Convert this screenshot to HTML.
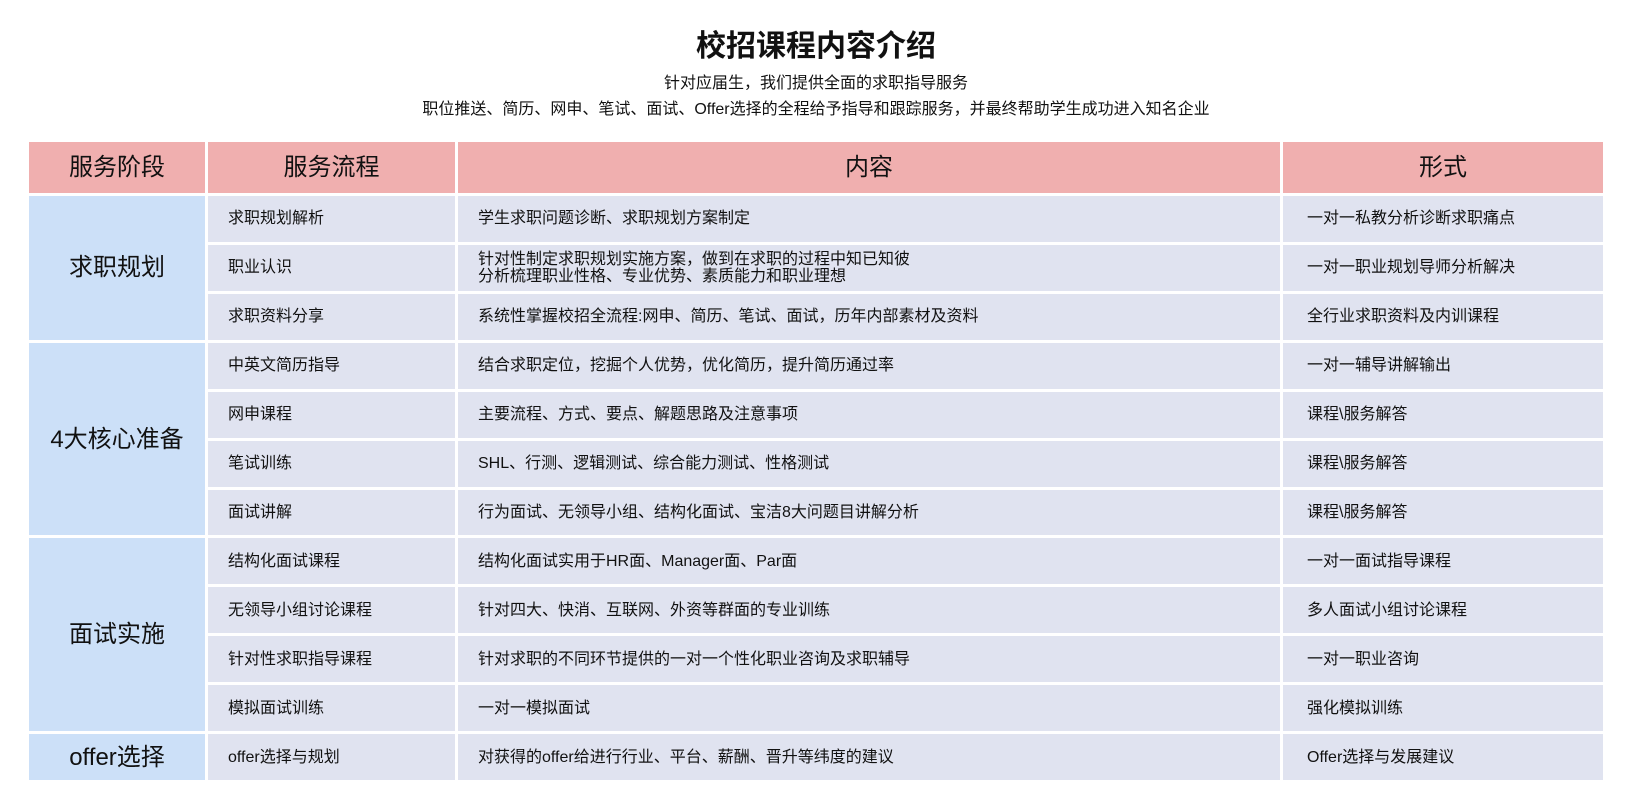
<!DOCTYPE html>
<html><head><meta charset="utf-8"><style>
body{margin:0;width:1632px;height:805px;background:#fff;font-family:"Liberation Sans","Noto Sans CJK SC",sans-serif;color:#111;position:relative;overflow:hidden}
h1{position:absolute;top:27px;left:0;width:1632px;text-align:center;margin:0;font-size:30px;font-weight:bold;line-height:40px}
.s{position:absolute;left:0;width:1632px;text-align:center;font-size:16px;line-height:20px}
.g{position:absolute;left:29px;top:142px;width:1574px;height:638px;display:grid;grid-template-columns:176px 247px 822px 320px;grid-template-rows:51px repeat(12,1fr);gap:3px}
.g div{background:#e0e3f0;display:flex;align-items:center;font-size:16px;line-height:17px}
.g .h{background:#f0afaf;justify-content:center;font-size:24px}
.g .b{background:#cce0f8;justify-content:center;font-size:24px}
.g .p{padding-left:20px}
.g .c{padding-left:20px}
.g .f{padding-left:24px}
</style></head><body>
<h1>校招课程内容介绍</h1>
<div class="s" style="top:74px">针对应届生，我们提供全面的求职指导服务</div>
<div class="s" style="top:100px">职位推送、简历、网申、笔试、面试、Offer选择的全程给予指导和跟踪服务，并最终帮助学生成功进入知名企业</div>
<div class="g">
<div class="h">服务阶段</div><div class="h">服务流程</div><div class="h">内容</div><div class="h">形式</div>
<div class="b" style="grid-row:2/5;grid-column:1">求职规划</div>
<div class="p">求职规划解析</div><div class="c">学生求职问题诊断、求职规划方案制定</div><div class="f">一对一私教分析诊断求职痛点</div>
<div class="p">职业认识</div><div class="c">针对性制定求职规划实施方案，做到在求职的过程中知已知彼<br>分析梳理职业性格、专业优势、素质能力和职业理想</div><div class="f">一对一职业规划导师分析解决</div>
<div class="p">求职资料分享</div><div class="c">系统性掌握校招全流程:网申、简历、笔试、面试，历年内部素材及资料</div><div class="f">全行业求职资料及内训课程</div>
<div class="b" style="grid-row:5/9;grid-column:1">4大核心准备</div>
<div class="p">中英文简历指导</div><div class="c">结合求职定位，挖掘个人优势，优化简历，提升简历通过率</div><div class="f">一对一辅导讲解输出</div>
<div class="p">网申课程</div><div class="c">主要流程、方式、要点、解题思路及注意事项</div><div class="f">课程\服务解答</div>
<div class="p">笔试训练</div><div class="c">SHL、行测、逻辑测试、综合能力测试、性格测试</div><div class="f">课程\服务解答</div>
<div class="p">面试讲解</div><div class="c">行为面试、无领导小组、结构化面试、宝洁8大问题目讲解分析</div><div class="f">课程\服务解答</div>
<div class="b" style="grid-row:9/13;grid-column:1">面试实施</div>
<div class="p">结构化面试课程</div><div class="c">结构化面试实用于HR面、Manager面、Par面</div><div class="f">一对一面试指导课程</div>
<div class="p">无领导小组讨论课程</div><div class="c">针对四大、快消、互联网、外资等群面的专业训练</div><div class="f">多人面试小组讨论课程</div>
<div class="p">针对性求职指导课程</div><div class="c">针对求职的不同环节提供的一对一个性化职业咨询及求职辅导</div><div class="f">一对一职业咨询</div>
<div class="p">模拟面试训练</div><div class="c">一对一模拟面试</div><div class="f">强化模拟训练</div>
<div class="b" style="grid-row:13/14;grid-column:1">offer选择</div>
<div class="p">offer选择与规划</div><div class="c">对获得的offer给进行行业、平台、薪酬、晋升等纬度的建议</div><div class="f">Offer选择与发展建议</div>
</div>
</body></html>
